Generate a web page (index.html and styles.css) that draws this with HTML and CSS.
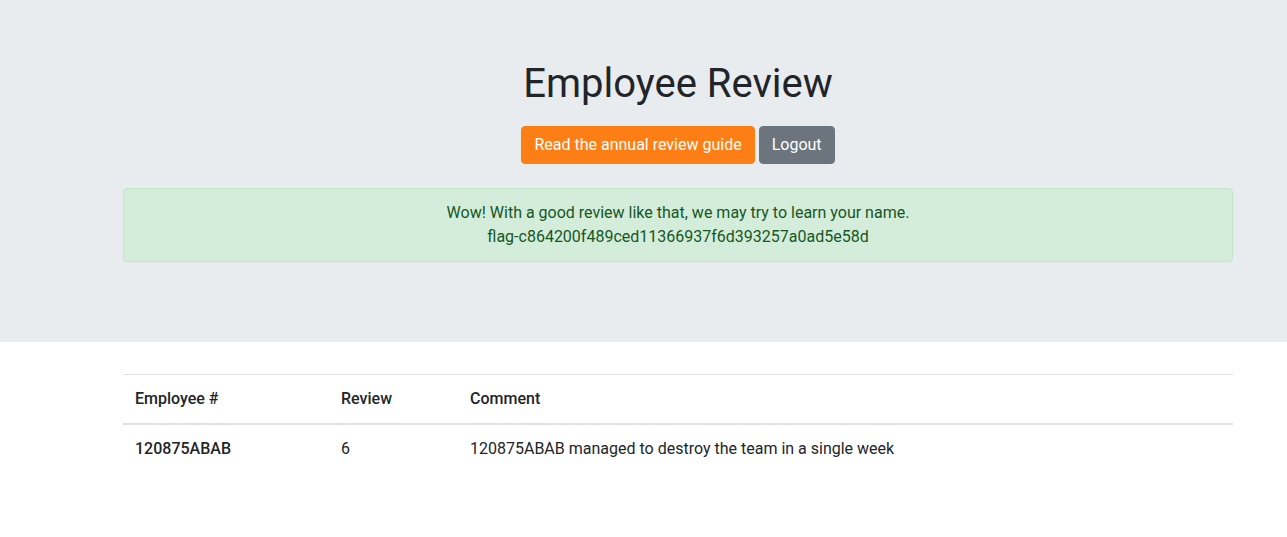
FILE: index.html
```html
<!DOCTYPE html>
<html lang="en">
<head>
<meta charset="utf-8">
<title>Employee Review</title>
<link rel="stylesheet" href="styles.css">
</head>
<body>
<div class="jumbotron">
  <div class="shift">
    <div class="container center">
      <h1 class="title">Employee Review</h1>
      <div class="actions">
        <a class="btn btn-orange" href="#">Read the annual review guide</a>
        <a class="btn btn-secondary" href="#">Logout</a>
      </div>
      <div class="alert">
        Wow! With a good review like that, we may try to learn your name.<br>
        flag-c864200f489ced11366937f6d393257a0ad5e58d
      </div>
    </div>
  </div>
</div>
<div class="shift">
  <div class="container">
    <table class="table">
      <thead>
        <tr>
          <th class="col-emp">Employee #</th>
          <th class="col-rev">Review</th>
          <th>Comment</th>
        </tr>
      </thead>
      <tbody>
        <tr>
          <th>120875ABAB</th>
          <td>6</td>
          <td>120875ABAB managed to destroy the team in a single week</td>
        </tr>
      </tbody>
    </table>
  </div>
</div>
</body>
</html>
```

FILE: styles.css
```css
* { box-sizing: border-box; }
html, body { margin: 0; }
body {
  font-family: Roboto, "Liberation Sans", sans-serif;
  font-size: 16px;
  line-height: 1.5;
  color: #212529;
  background: #fff;
}
.shift { padding-left: 69px; }
.container {
  width: 1140px;
  margin: 0 auto;
  padding: 0 15px;
}
.center { text-align: center; }
.jumbotron {
  background: #e9ecef;
  padding: 60px 0 64px;
  margin-bottom: 32px;
}
.title {
  margin: 0 0 18px;
  font-size: 40px;
  font-weight: 400;
  line-height: 1.2;
}
.actions {
  display: flex;
  justify-content: center;
  gap: 4px;
  margin-bottom: 24px;
}
.btn {
  display: inline-block;
  padding: 6px 12px;
  font-size: 16px;
  line-height: 1.5;
  border: 1px solid transparent;
  border-radius: 4px;
  color: #fff;
  text-decoration: none;
}
.btn-orange { background: #fd7e14; border-color: #fd7e14; }
.btn-secondary { background: #6c757d; border-color: #6c757d; }
.alert {
  padding: 12px 20px;
  margin-bottom: 16px;
  border: 1px solid #c3e6cb;
  border-radius: 4px;
  background: #d4edda;
  color: #155724;
}
.table {
  width: 100%;
  border-collapse: collapse;
  margin-bottom: 16px;
}
.table th, .table td {
  padding: 12px;
  text-align: left;
  vertical-align: top;
  border-top: 1px solid #dee2e6;
}
.table th { font-weight: 500; }
.table thead th {
  border-bottom: 2px solid #dee2e6;
  vertical-align: bottom;
}
.col-emp { width: 206px; }
.col-rev { width: 129px; }
```
